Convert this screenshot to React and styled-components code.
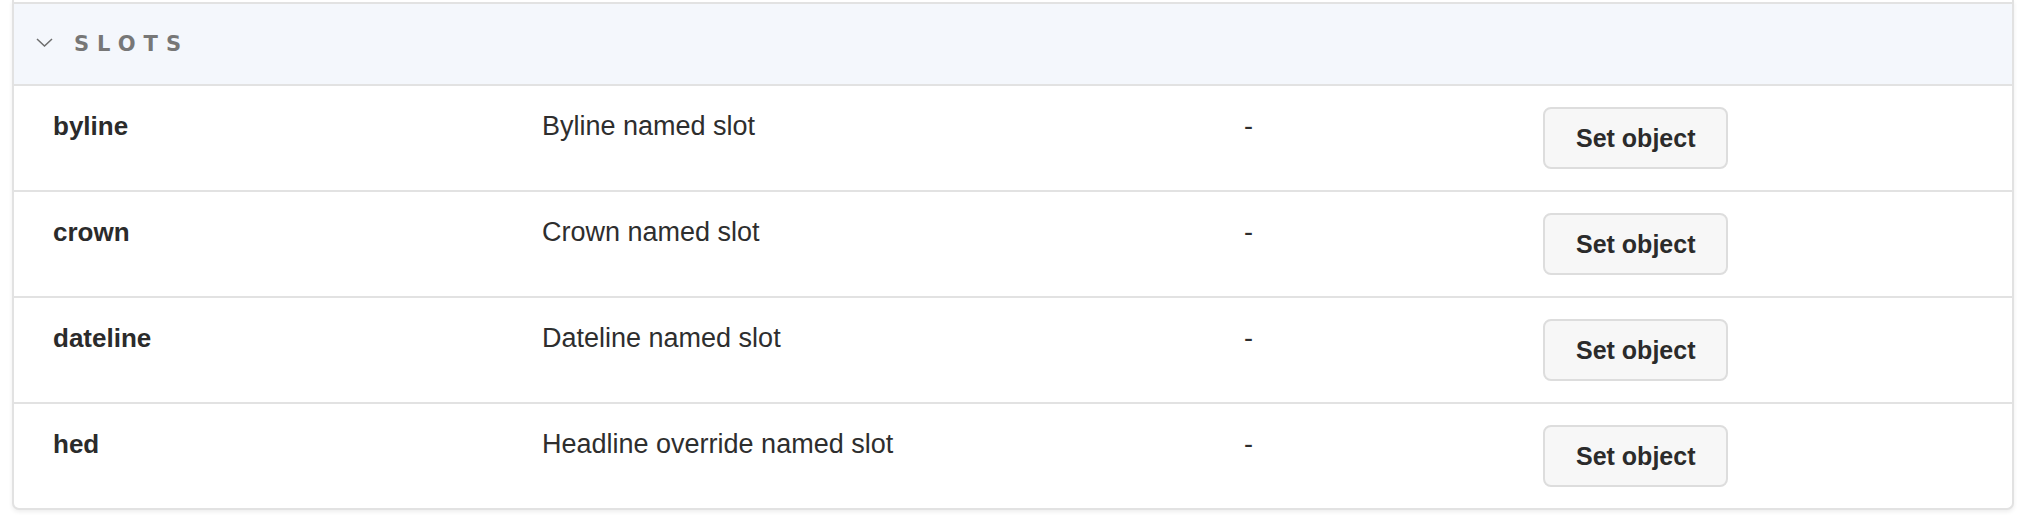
import React from 'react';
import styled, { createGlobalStyle } from 'styled-components';

const GlobalStyle = createGlobalStyle`
  body {
    margin: 0;
    background: #ffffff;
    font-family: 'Liberation Sans', Arial, sans-serif;
  }
`;

export default function App() {
  return (
    <Page>
      <GlobalStyle />
      <Panel>
        <Header>
          <Chevron width="17" height="9" viewBox="0 0 17 9">
            <path d="M1 1 L8.5 8 L16 1" fill="none" stroke="#6e6e6e" strokeWidth="1.5" />
          </Chevron>
          <HeaderTitle>Slots</HeaderTitle>
        </Header>
        {slots.map((item) => (
          <Row key={item.name}>
            <Name>{item.name}</Name>
            <Description>{item.description}</Description>
            <Description>-</Description>
            <Cell>
              <SetButton type="button">Set object</SetButton>
            </Cell>
          </Row>
        ))}
      </Panel>
    </Page>
  );
}

const slots = [
  { name: 'byline', description: 'Byline named slot' },
  { name: 'crown', description: 'Crown named slot' },
  { name: 'dateline', description: 'Dateline named slot' },
  { name: 'hed', description: 'Headline override named slot' }
];

const Page = styled.div`
  padding: 0 14px 0 12px;
  height: 524px;
  box-sizing: border-box;
`;

const Panel = styled.div`
  border: 2px solid #e2e2e2;
  border-top: none;
  border-radius: 0 0 7px 7px;
  padding-top: 2px;
  box-shadow: 0 2px 4px rgba(0, 0, 0, 0.07);
  background: #ffffff;
`;

const Header = styled.div`
  display: flex;
  align-items: center;
  gap: 21px;
  height: 80px;
  padding-left: 22px;
  background-color: #f4f7fc;
  border-top: 2px solid #e2e2e2;
  border-bottom: 2px solid #e2e2e2;
`;

const Chevron = styled.svg`
  display: block;
  margin-top: -3px;
`;

const HeaderTitle = styled.span`
  font-family: 'DejaVu Sans', 'Liberation Sans', sans-serif;
  font-size: 21px;
  font-weight: bold;
  text-transform: uppercase;
  letter-spacing: 8px;
  color: #777777;
`;

const Row = styled.div`
  display: grid;
  grid-template-columns: 489px 702px 299px 1fr;
  align-items: start;
  height: 62px;
  padding: 21px 0 21px 39px;
  border-bottom: 2px solid #e2e2e2;

  &:last-child {
    border-bottom: none;
  }
`;

const Cell = styled.div`
  display: flex;
`;

const Name = styled.div`
  font-size: 26px;
  line-height: 38px;
  font-weight: bold;
  color: #2b2b2b;
`;

const Description = styled.div`
  font-size: 27px;
  line-height: 38px;
  color: #2e2e2e;
`;

const SetButton = styled.button`
  height: 62px;
  padding: 0 31px;
  border: 2px solid #dddddd;
  border-radius: 8px;
  background-color: #f7f7f7;
  font-family: 'Liberation Sans', Arial, sans-serif;
  font-size: 25px;
  font-weight: bold;
  color: #2b2b2b;
  cursor: pointer;
`;
